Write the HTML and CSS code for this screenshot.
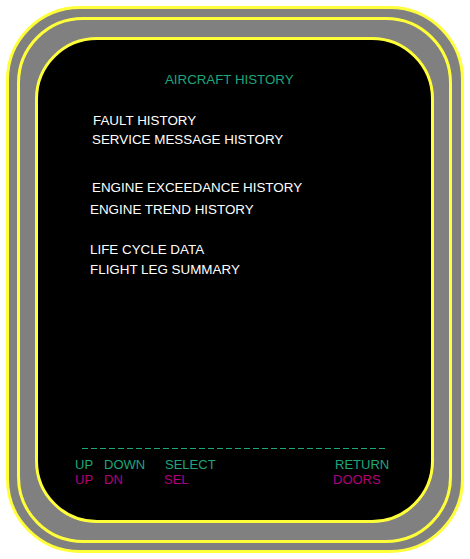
FILE: index.html
```html
<!DOCTYPE html>
<html>
<head>
<meta charset="utf-8">
<link rel="stylesheet" href="styles.css">
</head>
<body>
<div class="bezel-outer">
  <div class="bezel-mid">
    <div class="screen">
      <div class="title">AIRCRAFT HISTORY</div>
      <div class="item i-fault">FAULT HISTORY</div>
      <div class="item i-service">SERVICE MESSAGE HISTORY</div>
      <div class="item i-exceed">ENGINE EXCEEDANCE HISTORY</div>
      <div class="item i-trend">ENGINE TREND HISTORY</div>
      <div class="item i-life">LIFE CYCLE DATA</div>
      <div class="item i-leg">FLIGHT LEG SUMMARY</div>
      <div class="dashes"></div>
      <div class="keys green">
        <span>UP</span><span>DOWN</span><span>SELECT</span><span>RETURN</span>
      </div>
      <div class="keys magenta">
        <span>UP</span><span>DN</span><span class="sh1">SEL</span><span class="sh2">DOORS</span>
      </div>
    </div>
  </div>
</div>
</body>
</html>
```

FILE: styles.css
```css
html, body {
  margin: 0;
  padding: 0;
  background: #ffffff;
}
body {
  padding: 6px;
  font-family: "Liberation Sans", Arial, sans-serif;
  font-size: 13px;
}
.bezel-outer {
  box-sizing: border-box;
  width: 458px;
  height: 547px;
  border: 3px solid #ffff3a;
  border-radius: 74px;
  background: #808080;
  padding: 8px 9px 7px 8px;
  display: flex;
}
.bezel-mid {
  box-sizing: border-box;
  flex: 1;
  border: 3px solid #ffff3a;
  border-radius: 66px;
  background: #808080;
  padding: 17px 15px 17px 15px;
  display: flex;
}
.screen {
  box-sizing: border-box;
  flex: 1;
  border: 3px solid #ffff3a;
  border-radius: 62px;
  background: #000000;
  display: flex;
  flex-direction: column;
  line-height: 19px;
}
.title {
  color: #1fa57c;
  font-size: 13.3px;
  margin-top: 30px;
  padding-left: 127px;
}
.item {
  color: #ffffff;
  font-size: 13.4px;
}
.i-fault { margin-top: 22px; padding-left: 55px; }
.i-service { padding-left: 54px; }
.i-exceed { margin-top: 29px; padding-left: 54px; }
.i-trend { margin-top: 3px; padding-left: 52px; }
.i-life { margin-top: 21px; padding-left: 52px; }
.i-leg { margin-top: 1px; padding-left: 52px; }
.dashes {
  margin-top: 169px;
  margin-left: 44px;
  width: 305px;
  height: 1px;
  background: repeating-linear-gradient(to right, #1fa57c 0, #1fa57c 6px, transparent 6px, transparent 9px);
}
.keys {
  display: grid;
  grid-template-columns: 29px 61px 170px auto;
  padding-left: 37px;
  line-height: 15px;
}
.green {
  color: #1fa57c;
  margin-top: 8px;
}
.magenta {
  color: #b0007f;
}
.sh1 { margin-left: -1px; }
.sh2 { margin-left: -2px; }
```
